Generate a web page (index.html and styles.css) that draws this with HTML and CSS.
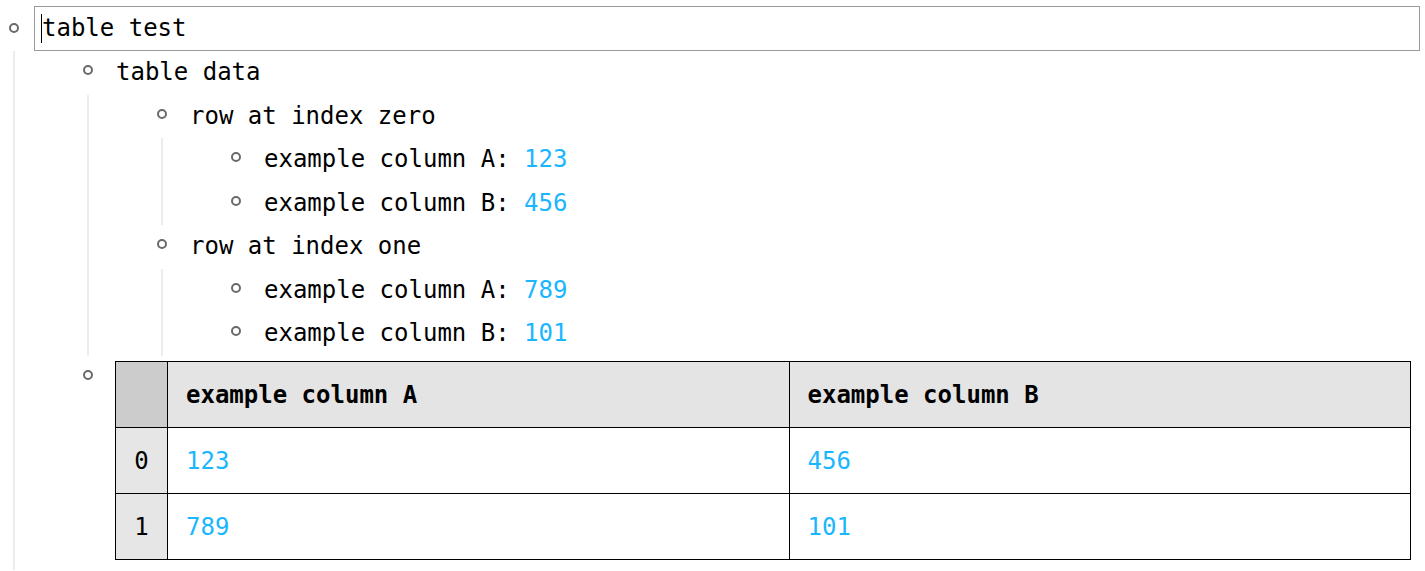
FILE: index.html
```html
<!DOCTYPE html>
<html lang="en">
<head>
<meta charset="utf-8">
<title>table test</title>
<link rel="stylesheet" href="styles.css">
</head>
<body>
<ul class="tree">
  <li class="node">
    <div class="row">
      <span class="bullet-cell top"><span class="bullet"></span></span>
      <div class="content editing"><span class="caret"></span>table test</div>
    </div>
    <ul class="children root-children">
      <li class="node">
        <div class="row">
          <span class="bullet-cell"><span class="bullet"></span></span>
          <div class="content">table data</div>
        </div>
        <ul class="children">
          <li class="node">
            <div class="row">
              <span class="bullet-cell"><span class="bullet"></span></span>
              <div class="content">row at index zero</div>
            </div>
            <ul class="children">
              <li class="node">
                <div class="row">
                  <span class="bullet-cell"><span class="bullet"></span></span>
                  <div class="content">example column A: <span class="num">123</span></div>
                </div>
              </li>
              <li class="node">
                <div class="row">
                  <span class="bullet-cell"><span class="bullet"></span></span>
                  <div class="content">example column B: <span class="num">456</span></div>
                </div>
              </li>
            </ul>
          </li>
          <li class="node">
            <div class="row">
              <span class="bullet-cell"><span class="bullet"></span></span>
              <div class="content">row at index one</div>
            </div>
            <ul class="children">
              <li class="node">
                <div class="row">
                  <span class="bullet-cell"><span class="bullet"></span></span>
                  <div class="content">example column A: <span class="num">789</span></div>
                </div>
              </li>
              <li class="node">
                <div class="row">
                  <span class="bullet-cell"><span class="bullet"></span></span>
                  <div class="content">example column B: <span class="num">101</span></div>
                </div>
              </li>
            </ul>
          </li>
        </ul>
      </li>
      <li class="node">
        <div class="row">
          <span class="bullet-cell"><span class="bullet"></span></span>
          <div class="content table-content">
            <table class="data">
              <colgroup>
                <col class="c-idx">
                <col class="c-val">
                <col class="c-val">
              </colgroup>
              <thead>
                <tr>
                  <th class="idx"></th>
                  <th>example column A</th>
                  <th>example column B</th>
                </tr>
              </thead>
              <tbody>
                <tr>
                  <td class="idx">0</td>
                  <td class="num">123</td>
                  <td class="num">456</td>
                </tr>
                <tr>
                  <td class="idx">1</td>
                  <td class="num">789</td>
                  <td class="num">101</td>
                </tr>
              </tbody>
            </table>
          </div>
        </div>
      </li>
    </ul>
  </li>
</ul>
</body>
</html>
```

FILE: styles.css
```css
html, body {
  background: #ffffff;
}

body {
  margin: 0;
  padding: 6px 5px 0 0;
  font-family: "DejaVu Sans Mono", "Liberation Mono", monospace;
  font-size: 24px;
  color: #000000;
}

.tree,
.children {
  list-style: none;
  margin: 0;
  padding: 0;
}

.children {
  margin-left: 13px;
  border-left: 2px solid #ececec;
  padding-left: 59px;
}

.root-children {
  padding-bottom: 10px;
}

.row {
  display: flex;
  align-items: flex-start;
  gap: 6px;
}

.bullet-cell {
  flex: none;
  width: 28px;
  height: 38px;
  display: flex;
  align-items: center;
  justify-content: center;
}

.bullet-cell.top {
  height: 44px;
}

.bullet {
  width: 10px;
  height: 10px;
  box-sizing: border-box;
  border: 2px solid #6a6a6a;
  border-radius: 50%;
}

.content {
  flex: 1;
  min-width: 0;
  border: 1px solid transparent;
  padding: 0 8px 0 7px;
  line-height: 41.5px;
  white-space: pre;
}

.content.editing {
  border-color: #9a9a9a;
  line-height: 43px;
}

.caret {
  display: inline-block;
  width: 1px;
  height: 29px;
  margin-left: -1px;
  background: #000000;
  vertical-align: -7px;
}

.num {
  color: #1ab6ff;
}

.content.table-content {
  border: none;
  padding: 5.5px 9px 0 7px;
  line-height: normal;
  white-space: normal;
}

.data {
  width: 100%;
  border-collapse: collapse;
  table-layout: fixed;
  border: 1px solid #000000;
}

.c-idx {
  width: 52px;
}

.data th,
.data td {
  border: 1px solid #000000;
  height: 65px;
  padding: 0 20px 0 18px;
  text-align: left;
  vertical-align: middle;
  white-space: nowrap;
}

.data th {
  background: #e4e4e4;
  font-weight: bold;
}

.data th.idx {
  background: #cccccc;
}

.data td.idx {
  background: #e6e6e6;
  text-align: center;
  padding: 0;
  color: #000000;
}
```
